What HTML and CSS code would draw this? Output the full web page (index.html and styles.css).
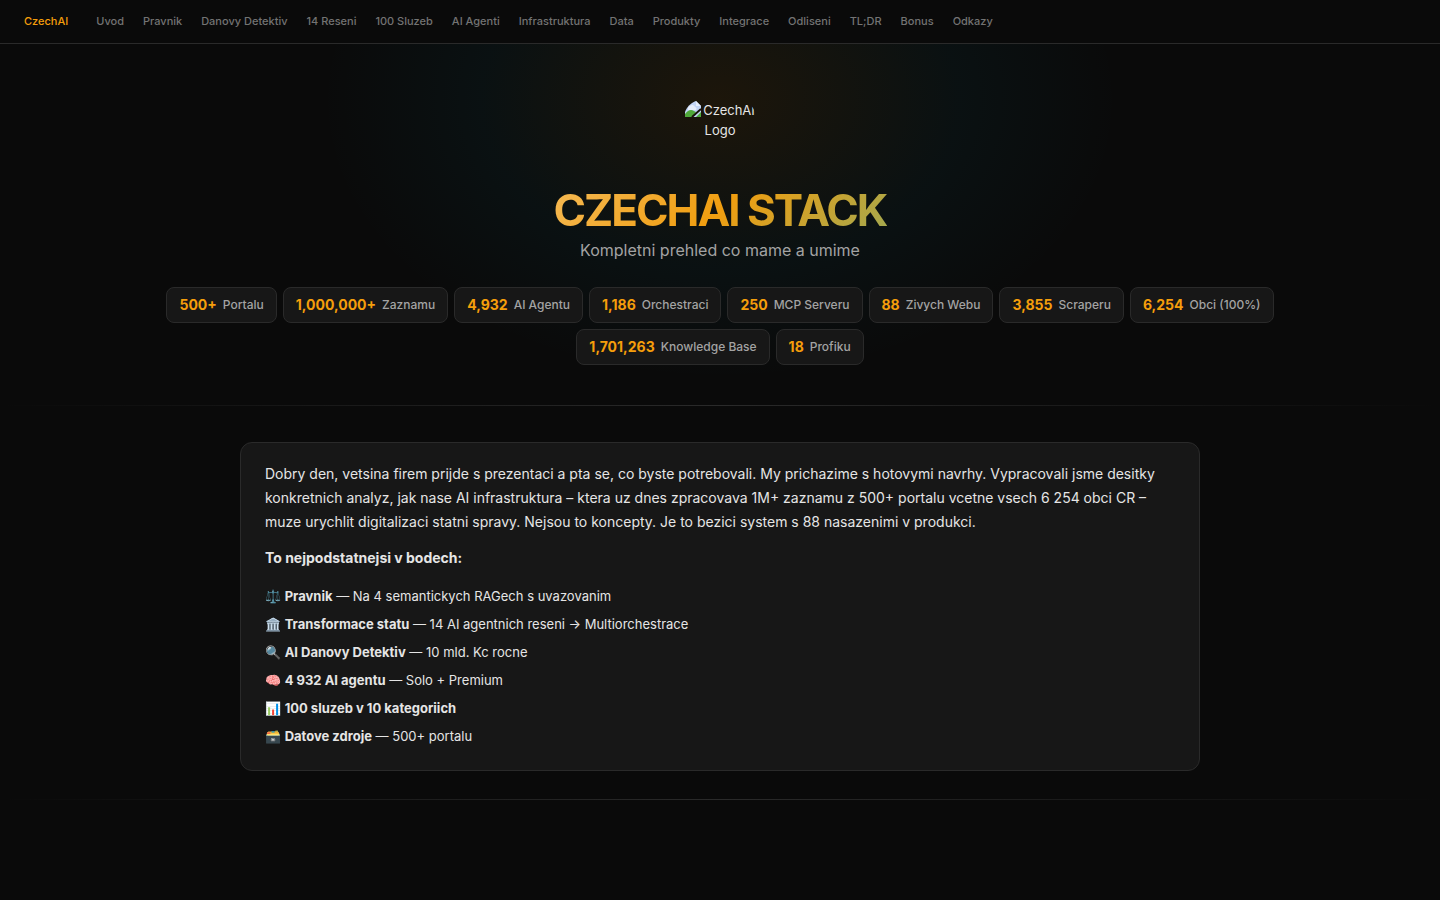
FILE: index.html
```html
<!DOCTYPE html>
<html lang="cs">
<head>
<meta charset="UTF-8">
<meta name="viewport" content="width=device-width, initial-scale=1.0">
<title>CzechAI Stack</title>
<link rel="stylesheet" href="styles.css">
</head>
<body>
<nav class="nav">
    <a class="nav-brand" href="#top">CzechAI</a>
    <a href="#uvod">Uvod</a>
    <a href="#pravnik">Pravnik</a>
    <a href="#detektiv">Danovy Detektiv</a>
    <a href="#reseni">14 Reseni</a>
    <a href="#sluzby">100 Sluzeb</a>
    <a href="#agenti">AI Agenti</a>
    <a href="#infra">Infrastruktura</a>
    <a href="#data">Data</a>
    <a href="#produkty">Produkty</a>
    <a href="#integrace">Integrace</a>
    <a href="#odliseni">Odliseni</a>
    <a href="#tldr">TL;DR</a>
    <a href="#bonus">Bonus</a>
    <a href="#odkazy">Odkazy</a>
</nav>

<header class="hero" id="top">
    <div class="logo">
        <svg class="logo-icon" width="16" height="16" viewBox="0 0 16 16" aria-hidden="true">
            <path fill="#c3d5f7" d="M0 0h11l5 5v11H0z"/>
            <path fill="#e6eefc" d="M3 7a2 2 0 0 1 2-2 3 3 0 0 1 5 1 2 2 0 0 1 1 3H3z"/>
            <path fill="#4fa83a" d="M0 16v-3c3-4 6-5 9-3l2 1-4 5z"/>
            <path fill="#4fa83a" d="M11 16l5-5v5z"/>
            <path fill="#e6eefc" d="M11 0l5 5h-5z"/>
            <path stroke="#17130b" stroke-width="2" d="M7 16l9-8"/>
        </svg>CzechAI Logo
    </div>
    <h1>CZECHAI STACK</h1>
    <p class="subtitle">Kompletni prehled co mame a umime</p>
    <div class="stats">
        <div class="stat"><b>500+</b><span>Portalu</span></div>
        <div class="stat"><b>1,000,000+</b><span>Zaznamu</span></div>
        <div class="stat"><b>4,932</b><span>AI Agentu</span></div>
        <div class="stat"><b>1,186</b><span>Orchestraci</span></div>
        <div class="stat"><b>250</b><span>MCP Serveru</span></div>
        <div class="stat"><b>88</b><span>Zivych Webu</span></div>
        <div class="stat"><b>3,855</b><span>Scraperu</span></div>
        <div class="stat"><b>6,254</b><span>Obci (100%)</span></div>
        <div class="stat"><b>1,701,263</b><span>Knowledge Base</span></div>
        <div class="stat"><b>18</b><span>Profiku</span></div>
    </div>
</header>

<div class="divider"></div>

<section class="intro" id="uvod">
    <div class="card">
        <p>Dobry den, vetsina firem prijde s prezentaci a pta se, co byste potrebovali. My prichazime s hotovymi navrhy. Vypracovali jsme desitky konkretnich analyz, jak nase AI infrastruktura – ktera uz dnes zpracovava 1M+ zaznamu z 500+ portalu vcetne vsech 6 254 obci CR – muze urychlit digitalizaci statni spravy. Nejsou to koncepty. Je to bezici system s 88 nasazenimi v produkci.</p>
        <p><strong>To nejpodstatnejsi v bodech:</strong></p>
        <ul>
            <li>⚖️ <strong>Pravnik</strong> — Na 4 semantickych RAGech s uvazovanim</li>
            <li>🏛️ <strong>Transformace statu</strong> — 14 AI agentnich reseni → Multiorchestrace</li>
            <li>🔍 <strong>AI Danovy Detektiv</strong> — 10 mld. Kc rocne</li>
            <li>🧠 <strong>4 932 AI agentu</strong> — Solo + Premium</li>
            <li>📊 <strong>100 sluzeb v 10 kategoriich</strong></li>
            <li>🗃️ <strong>Datove zdroje</strong> — 500+ portalu</li>
        </ul>
    </div>
</section>

<div class="divider"></div>
</body>
</html>
```

FILE: styles.css
```css
* {
    box-sizing: border-box;
    margin: 0;
    padding: 0;
}
body {
    font-family: Inter, sans-serif;
    font-size: 13px;
    line-height: 20px;
    background-color: #0a0a0a;
    color: #e5e5e5;
}

/* navigation */
.nav {
    display: flex;
    align-items: center;
    gap: 19px;
    padding: 11px 24px 12px;
    border-bottom: 1px solid #2a2a2a;
    font-size: 11px;
    font-weight: 500;
}
.nav a {
    color: #737373;
    text-decoration: none;
    white-space: nowrap;
}
.nav .nav-brand {
    color: #f59e0b;
    margin-right: 9px;
}

/* hero */
.hero {
    padding: 56px 24px 40px;
    text-align: center;
    background: radial-gradient(ellipse 400px 280px at 50% 56px, rgba(245, 158, 11, 0.08), rgba(6, 182, 212, 0.04) 60%, transparent);
}
.logo {
    width: 72px;
    height: 72px;
    margin: 0 auto 14px;
    border-radius: 18px;
    overflow: hidden;
}
.logo-icon {
    vertical-align: -2px;
    margin-right: 2px;
}
h1 {
    width: fit-content;
    margin: 0 auto 4px;
    font-size: 44px;
    line-height: 48px;
    font-weight: 700;
    letter-spacing: -2px;
    background: linear-gradient(135deg, #f5b954, #f09e10 50%, #a3a84f);
    -webkit-background-clip: text;
    background-clip: text;
    color: transparent;
}
.subtitle {
    font-size: 16px;
    line-height: 24px;
    color: #a3a3a3;
    margin-bottom: 25px;
}
.stats {
    display: flex;
    flex-wrap: wrap;
    justify-content: center;
    gap: 6px;
    max-width: 1200px;
    margin: 0 auto;
}
.stat {
    display: flex;
    align-items: center;
    gap: 6px;
    padding: 7px 12px;
    background-color: #171717;
    border: 1px solid #2a2a2a;
    border-radius: 8px;
    font-size: 12px;
    font-weight: 500;
    color: #a3a3a3;
}
.stat b {
    font-size: 14px;
    font-weight: 700;
    color: #f59e0b;
}

.divider {
    height: 1px;
    background: linear-gradient(90deg, transparent, #2a2a2a, transparent);
}

/* intro */
.intro {
    padding: 36px 24px 28px;
}
.card {
    max-width: 960px;
    margin: 0 auto;
    padding: 19px 24px 20px;
    background-color: #171717;
    border: 1px solid #2a2a2a;
    border-radius: 12px;
}
.card p {
    font-size: 14px;
    line-height: 24px;
    margin-bottom: 12px;
}
.card ul {
    list-style: none;
}
.card li {
    line-height: 20px;
    padding: 4px 0;
}
```
